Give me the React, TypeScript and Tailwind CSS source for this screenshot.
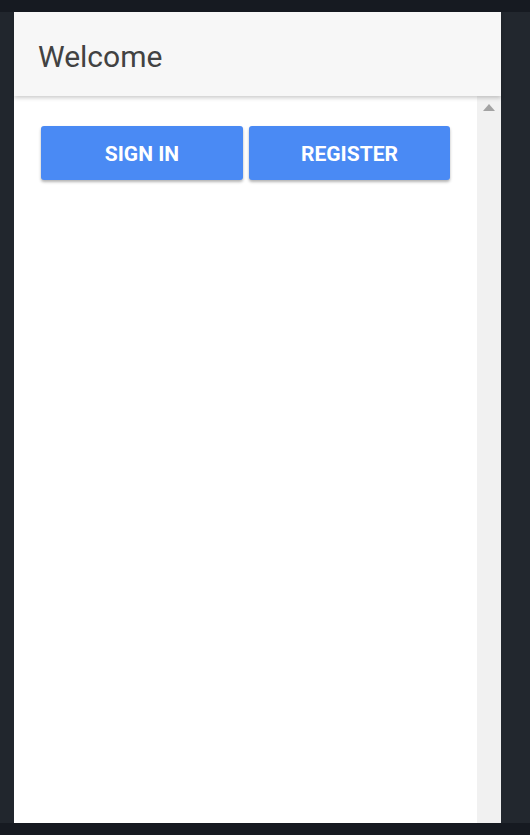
export default function App() {
  return (
    <div
      className="w-[530px] h-[835px] flex flex-col bg-[#22272e] overflow-hidden"
      style={{ fontFamily: "Roboto, 'Liberation Sans', sans-serif" }}
    >
      <div className="h-[12px] bg-[#161a21]" />
      <div className="flex flex-1 min-h-0">
        <div className="w-[14px] bg-[#21262d]" />
        <div className="w-[487px] flex flex-col bg-white">
          <div className="relative z-10 h-[84px] flex items-center px-6 pt-[4px] bg-[#f7f7f7] shadow-[0_2px_4px_rgba(0,0,0,0.2)]">
            <h1 className="text-[30px] text-[#424242] font-normal">Welcome</h1>
          </div>
          <div className="flex flex-1 min-h-0">
            <div className="flex-1 bg-white pt-[30px] pl-[27px]">
              <div className="flex gap-[6px]">
                <button className="w-[202px] h-[54px] pt-[4px] rounded-[3px] bg-[#4a8af4] text-white text-[21px] font-bold uppercase shadow-[0_2px_3px_rgba(0,0,0,0.3)]">
                  Sign in
                </button>
                <button className="w-[201px] h-[54px] pt-[4px] rounded-[3px] bg-[#4a8af4] text-white text-[21px] font-bold uppercase shadow-[0_2px_3px_rgba(0,0,0,0.3)]">
                  Register
                </button>
              </div>
            </div>
            <div className="w-[24px] bg-[#f1f1f1] flex justify-center pt-[8px]">
              <svg width="12" height="7" viewBox="0 0 12 7">
                <polygon points="0,7 6,0 12,7" fill="#a3a3a3" />
              </svg>
            </div>
          </div>
        </div>
        <div className="flex-1 bg-[#22272e]" />
      </div>
      <div className="h-[12px] bg-[#161a21]" />
    </div>
  );
}
